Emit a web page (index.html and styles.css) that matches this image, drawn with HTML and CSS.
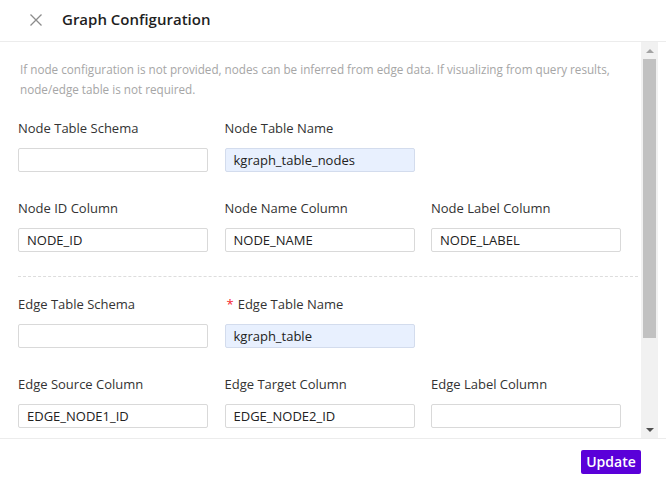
FILE: index.html
```html
<!DOCTYPE html>
<html>
<head>
<meta charset="utf-8">
<link rel="stylesheet" href="styles.css">
</head>
<body>
<div class="modal">
  <div class="header">
    <svg class="close" width="12" height="12" viewBox="0 0 12 12"><path d="M0.5 0.5L11.5 11.5M11.5 0.5L0.5 11.5" stroke="#8c8c8c" stroke-width="1.3" fill="none"/></svg>
    <div class="title">Graph Configuration</div>
  </div>
  <div class="body-wrap">
    <div class="content">
      <p class="desc">If node configuration is not provided, nodes can be inferred from edge data. If visualizing from query results, node/edge table is not required.</p>
      <div class="grid">
        <div class="field"><label class="label">Node Table Schema</label><div class="input"></div></div>
        <div class="field"><label class="label">Node Table Name</label><div class="input filled">kgraph_table_nodes</div></div>
        <div class="field"></div>
      </div>
      <div class="grid">
        <div class="field"><label class="label">Node ID Column</label><div class="input">NODE_ID</div></div>
        <div class="field"><label class="label">Node Name Column</label><div class="input">NODE_NAME</div></div>
        <div class="field"><label class="label">Node Label Column</label><div class="input">NODE_LABEL</div></div>
      </div>
      <div class="divider"></div>
      <div class="grid">
        <div class="field"><label class="label">Edge Table Schema</label><div class="input"></div></div>
        <div class="field"><label class="label"><span class="req">*</span>Edge Table Name</label><div class="input filled">kgraph_table</div></div>
        <div class="field"></div>
      </div>
      <div class="grid">
        <div class="field"><label class="label">Edge Source Column</label><div class="input">EDGE_NODE1_ID</div></div>
        <div class="field"><label class="label">Edge Target Column</label><div class="input">EDGE_NODE2_ID</div></div>
        <div class="field"><label class="label">Edge Label Column</label><div class="input"></div></div>
      </div>
    </div>
    <div class="scrollbar">
      <div class="arrow up"></div>
      <div class="thumb"></div>
      <div class="track-rest"></div>
      <div class="arrow down"></div>
    </div>
  </div>
  <div class="footer">
    <button class="btn">Update</button>
  </div>
</div>
</body>
</html>
```

FILE: styles.css
```css
html, body {
  margin: 0;
  padding: 0;
  background: #ffffff;
}
body {
  font-family: "Open Sans", "Noto Sans", "Liberation Sans", sans-serif;
  color: #333333;
}
.modal {
  width: 666px;
  height: 483px;
  display: flex;
  flex-direction: column;
  overflow: hidden;
}
.header {
  flex: none;
  border-bottom: 1px solid #ececec;
  display: flex;
  align-items: center;
  padding-left: 30px;
  box-sizing: border-box;
  height: 42px;
}
.close {
  flex: none;
  margin-top: -2px;
}
.title {
  margin-left: 20px;
  font-size: 15px;
  font-weight: 600;
  color: #1f1f1f;
  margin-top: -3px;
}
.body-wrap {
  height: 396px;
  flex: none;
  display: flex;
  margin-right: 8px;
}
.content {
  flex: 1;
  overflow: hidden;
  padding: 17px 3px 0 18px;
}
.desc {
  margin: 0 0 19px 2px;
  font-size: 11.7px;
  line-height: 20px;
  color: #a6a6a6;
}
.grid {
  display: grid;
  grid-template-columns: repeat(3, 190px);
  column-gap: 16.5px;
  margin-bottom: 26px;
}
.field {
  display: flex;
  flex-direction: column;
}
.label {
  font-size: 13px;
  line-height: 20px;
  height: 20px;
  margin-bottom: 10px;
  color: #333333;
  white-space: nowrap;
}
.req {
  color: #f5222d;
  margin-right: 4px;
  margin-left: 2px;
}
.input {
  height: 24px;
  box-sizing: border-box;
  border: 1px solid #d9d9d9;
  border-radius: 2px;
  padding-left: 8px;
  font-size: 13px;
  line-height: 22px;
  color: #222222;
  background: #ffffff;
}
.input.filled {
  background: #e8f0fe;
  border-color: #d3dced;
}
.divider {
  border-top: 1px dashed #dddddd;
  margin: -2px 0 17px 0;
}
.scrollbar {
  width: 17px;
  flex: none;
  background: #f1f1f1;
  display: flex;
  flex-direction: column;
  align-items: center;
}
.arrow {
  width: 0;
  height: 0;
  border-left: 4px solid transparent;
  border-right: 4px solid transparent;
  flex: none;
}
.arrow.up {
  border-bottom: 4px solid #a3a3a3;
  margin-top: 7px;
  margin-bottom: 6px;
}
.arrow.down {
  border-top: 4px solid #505050;
  margin-top: 0;
  margin-bottom: 6px;
}
.thumb {
  width: 13px;
  height: 279px;
  background: #c1c1c1;
  flex: none;
}
.track-rest {
  flex: 1;
}
.footer {
  flex: 1;
  border-top: 1px solid #ececec;
  display: flex;
  justify-content: flex-end;
  align-items: flex-start;
  padding: 11px 25px 0 0;
}
.btn {
  width: 60px;
  height: 24px;
  border: none;
  border-radius: 2px;
  background: #5a00d9;
  color: #ffffff;
  font-family: "Open Sans", "Noto Sans", "Liberation Sans", sans-serif;
  font-size: 14px;
  font-weight: 600;
  padding: 0;
  line-height: 24px;
}
```
